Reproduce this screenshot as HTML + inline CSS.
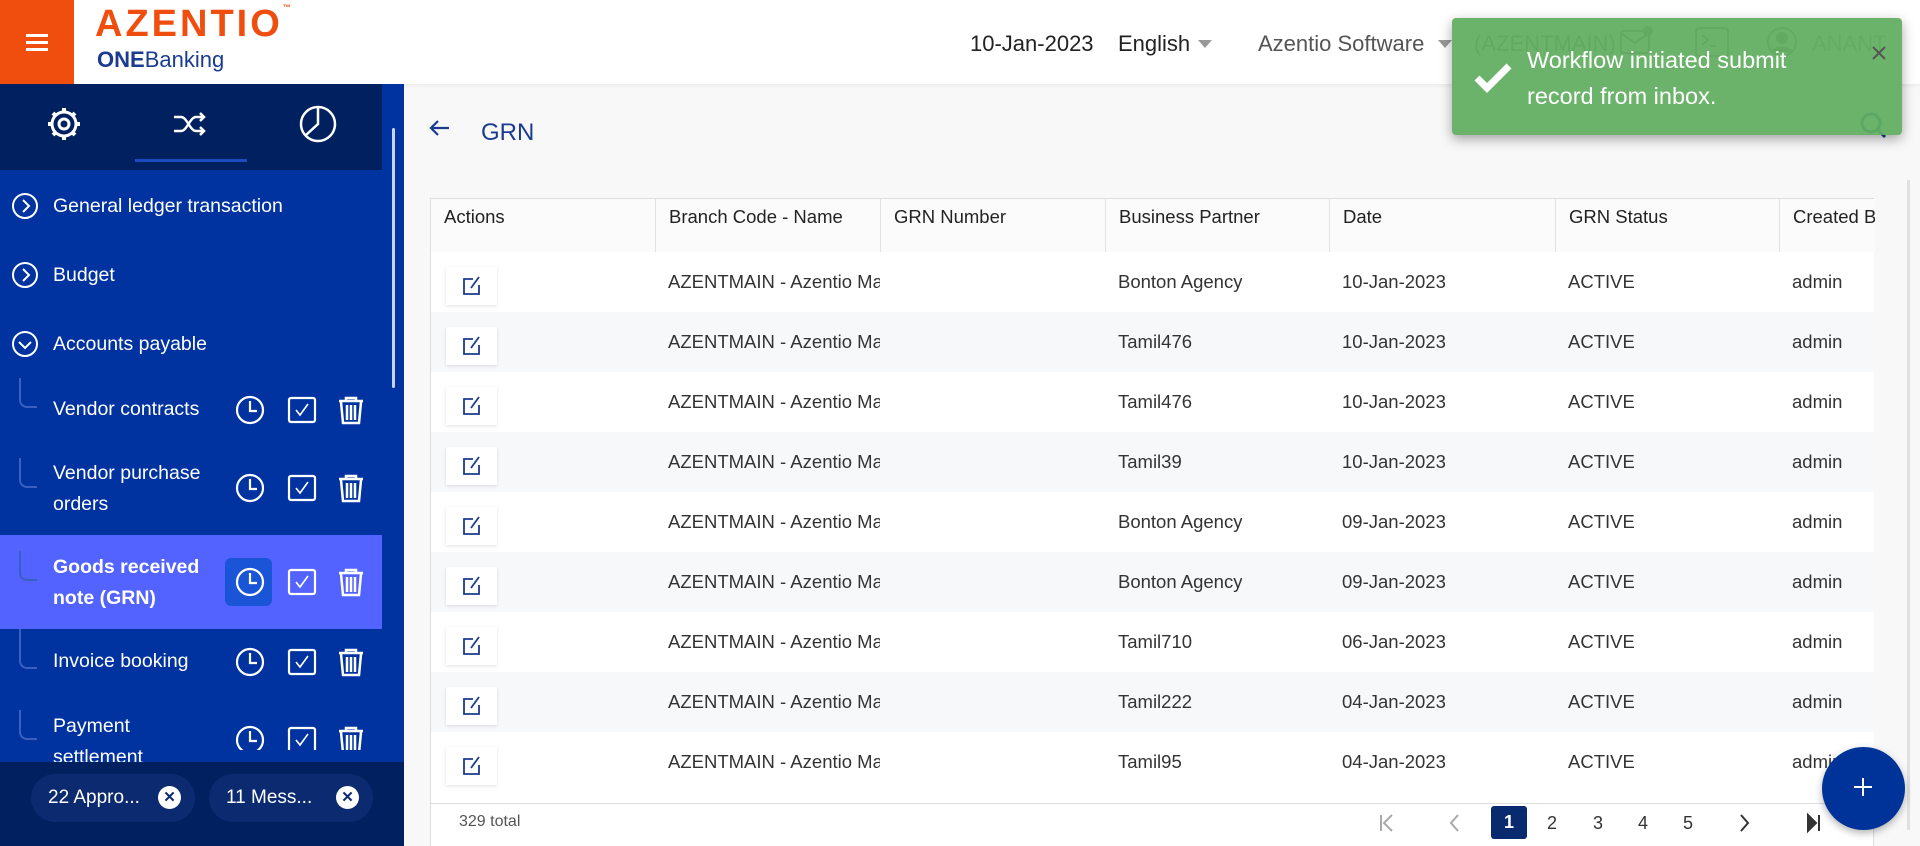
<!DOCTYPE html>
<html><head><meta charset="utf-8"><style>
*{box-sizing:border-box;margin:0;padding:0}
body{width:1920px;height:846px;overflow:hidden;background:#f8f8f8;font-family:"Liberation Sans",sans-serif;position:relative;color:#333}
.a{position:absolute}
.hdr{left:0;top:0;width:1920px;height:84px;background:#fff;box-shadow:0 2px 4px rgba(0,0,0,.05)}
.burger{left:0;top:0;width:74px;height:84px;background:#f04e0e}
.burger i{position:absolute;left:26px;width:22px;height:3px;background:#fff}
.htxt{font-size:22px;color:#222;top:31px}
.caret{width:0;height:0;border-left:7px solid transparent;border-right:7px solid transparent;border-top:8px solid #999;top:40px}
.side{left:0;top:84px;width:404px;height:762px;background:#0033a0}
.tabs{left:0;top:84px;width:382px;height:86px;background:#002060}
.mi{color:#fff;font-size:19.5px;left:53px}
.circ{left:12px;width:26px;height:26px;border:2px solid #fff;border-radius:50%}
.tree{left:19px;width:18px;border-left:2px solid #3a5fc0;border-bottom:2px solid #3a5fc0;border-bottom-left-radius:8px}
.tbl{left:430px;top:198px;width:1444px;height:648px;background:#fff;border:1px solid #ddd;border-bottom:none}
.th{top:0;height:54px;border-right:1px solid #e2e2e2;font-size:18.5px;color:#222;padding:7px 13px;background:#fbfbfb}
.row{left:0;width:1443px;height:60px}
.td{font-size:18.5px;color:#333;top:19px;white-space:nowrap;overflow:hidden}
.eb{left:15px;top:15px;width:51px;height:38px;background:#fff;box-shadow:0 1px 3px rgba(0,0,0,.12)}
.pg{font-size:18px;color:#333;top:813px}
.chip{top:774px;height:48px;border-radius:24px;background:#0b2a70;color:#fff;font-size:19px;padding:13px 0 0 17px}
.chip b{position:absolute;right:14px;top:12px;width:23px;height:23px;border-radius:50%;background:#fff;color:#0b2a70;font-size:15px;text-align:center;line-height:23px}
</style></head><body>
<div class="a hdr"></div>
<div class="a burger"><i style="top:34px"></i><i style="top:41px"></i><i style="top:48px"></i></div>
<div class="a" style="left:95px;top:3px;font-size:38px;font-weight:bold;color:#f04e0e;letter-spacing:3px">AZENTIO<span style="font-size:8px;vertical-align:top">™</span></div>
<div class="a" style="left:97px;top:47px;font-size:22px;color:#1a3b8f"><b>ONE</b>Banking</div>
<div class="a htxt" style="left:970px">10-Jan-2023</div>
<div class="a htxt" style="left:1118px">English</div><div class="a caret" style="left:1198px"></div>
<div class="a htxt" style="left:1258px;color:#555">Azentio Software</div><div class="a caret" style="left:1438px"></div>
<div class="a htxt" style="left:1474px;color:#555">(AZENTMAIN)</div>
<div class="a htxt" style="left:1812px;color:#888">ANANT</div>
<svg class="a" style="left:1620px;top:26px" width="240" height="32" fill="none" stroke="#666" stroke-width="2"><rect x="1" y="5" width="28" height="22" rx="2"/><path d="M1 7l14 10 14-10"/><circle cx="28" cy="5" r="4" fill="#666"/><rect x="76" y="2" width="32" height="28" rx="3"/><path d="M82 9l6 5-6 5M90 20h6"/><circle cx="162" cy="16" r="14"/><circle cx="162" cy="12" r="5" fill="#666"/><path d="M152 26c4-6 16-6 20 0" fill="#666"/></svg>

<div class="a side"></div>
<div class="a tabs"></div>
<svg class="a" style="left:40px;top:104px" width="300" height="40" fill="none" stroke="#fff" stroke-width="3"><circle cx="24" cy="20" r="12"/><circle cx="24" cy="20" r="5"/><path d="M24 4v4M24 32v4M8 20h4M36 20h4M13 9l3 3M32 28l3 3M13 31l3-3M32 12l3-3" stroke-width="4"/><path d="M134 13h7c6 0 9 14 15 14h7M134 27h7c6 0 9-14 15-14h7M160 9l4 4-4 4M160 23l4 4-4 4" stroke-width="2.5"/><circle cx="278" cy="20" r="17" stroke-width="2.5"/><path d="M278 3v17l-12 11" stroke-width="2.5"/></svg>
<div class="a" style="left:135px;top:159px;width:112px;height:3px;background:#1a4cc0"></div>
<div class="a" style="left:392px;top:128px;width:3px;height:260px;background:#c8d2ee;border-radius:2px"></div>

<div class="a circ" style="top:193px"></div><svg class="a" style="left:20px;top:199px" width="12" height="14" fill="none" stroke="#fff" stroke-width="2"><path d="M3 1l6 6-6 6"/></svg>
<div class="a mi" style="top:195px">General ledger transaction</div>
<div class="a circ" style="top:262px"></div><svg class="a" style="left:20px;top:268px" width="12" height="14" fill="none" stroke="#fff" stroke-width="2"><path d="M3 1l6 6-6 6"/></svg>
<div class="a mi" style="top:264px">Budget</div>
<div class="a circ" style="top:331px"></div><svg class="a" style="left:18px;top:339px" width="14" height="12" fill="none" stroke="#fff" stroke-width="2"><path d="M1 3l6 6 6-6"/></svg>
<div class="a mi" style="top:333px">Accounts payable</div>

<div class="a" style="left:0;top:535px;width:382px;height:94px;background:#5363ff"></div>
<div class="a" style="left:225px;top:558px;width:47px;height:48px;background:#1a55d8;border-radius:6px"></div>

<div class="a tree" style="top:378px;height:30px"></div><div class="a mi" style="top:398px">Vendor contracts</div>
<div class="a tree" style="top:458px;height:30px"></div><div class="a mi" style="top:458px;line-height:31px">Vendor purchase<br>orders</div>
<div class="a tree" style="top:551px;height:30px"></div><div class="a mi" style="top:552px;line-height:31px;font-weight:bold">Goods received<br>note (GRN)</div>
<div class="a tree" style="top:629px;height:40px"></div><div class="a mi" style="top:650px">Invoice booking</div>
<div class="a tree" style="top:710px;height:30px"></div><div class="a mi" style="top:711px;line-height:31px">Payment<br>settlement</div>

<svg class="a" style="left:230px;top:390px" width="140" height="360" fill="none" stroke="#fff" stroke-width="2.2">
<g id="ic"><circle cx="20" cy="20" r="13"/><path d="M20 11v10h7"/><rect x="59" y="8" width="26" height="24" rx="2"/><path d="M66 20l4 5 8-11" stroke-width="1.6"/><path d="M109 11h24M116 11v-3h10v3M111 12l2 21h16l2-21M117 15v15M121 15v15M125 15v15" stroke-width="2.5"/></g>
<use href="#ic" y="78"/><use href="#ic" y="172"/><use href="#ic" y="252"/><use href="#ic" y="330"/>
</svg>

<div class="a" style="left:0;top:762px;width:404px;height:84px;background:#012060"></div>
<div class="a chip" style="left:31px;width:164px">22 Appro...<b>✕</b></div>
<div class="a chip" style="left:209px;width:164px">11 Mess...<b>✕</b></div>

<svg class="a" style="left:428px;top:118px" width="24" height="20" fill="none" stroke="#1a3b8f" stroke-width="2.2"><path d="M21 10H3M10 3L3 10l7 7"/></svg>
<div class="a" style="left:481px;top:119px;font-size:24px;color:#1a3b8f">GRN</div>
<div class="a" style="left:1907px;top:180px;width:3px;height:650px;background:#e0e0e0"></div>

<div class="a tbl">
<div class="a th" style="left:0;width:225px">Actions</div>
<div class="a th" style="left:225px;width:225px">Branch Code - Name</div>
<div class="a th" style="left:450px;width:225px">GRN Number</div>
<div class="a th" style="left:675px;width:224px">Business Partner</div>
<div class="a th" style="left:899px;width:226px">Date</div>
<div class="a th" style="left:1125px;width:224px">GRN Status</div>
<div class="a th" style="left:1349px;width:95px;white-space:nowrap;overflow:hidden;border-right:none">Created By</div>
<div class="a" style="left:0;top:53px;width:1443px;height:1px;background:#ddd"></div>
<div class="a" style="left:0;top:604px;width:1443px;height:1px;background:#ddd"></div>
</div>
<div id="rows"></div>
<script>
var d=[["Bonton Agency","10-Jan-2023"],["Tamil476","10-Jan-2023"],["Tamil476","10-Jan-2023"],["Tamil39","10-Jan-2023"],["Bonton Agency","09-Jan-2023"],["Bonton Agency","09-Jan-2023"],["Tamil710","06-Jan-2023"],["Tamil222","04-Jan-2023"],["Tamil95","04-Jan-2023"]];
var h="";d.forEach(function(r,i){var y=252+i*60;h+='<div class="a row" style="left:431px;top:'+y+'px;background:'+(i%2?'#f7f8fa':'#fff')+'"><div class="a eb"><svg style="position:absolute;left:15px;top:8px" width="22" height="22" fill="none" stroke="#1a3b8f" stroke-width="1.8"><path d="M12 4H3v15h15v-9"/><path d="M10 13l8-11"/></svg></div><div class="a td" style="left:237px;width:212px">AZENTMAIN - Azentio Main</div><div class="a td" style="left:687px">'+r[0]+'</div><div class="a td" style="left:911px">'+r[1]+'</div><div class="a td" style="left:1137px">ACTIVE</div><div class="a td" style="left:1361px">admin</div></div>'});
document.getElementById("rows").innerHTML=h;
</script>
<div class="a" style="left:459px;top:813px;font-size:16px;color:#555">329 total</div>
<svg class="a" style="left:1378px;top:812px" width="460" height="22" fill="none" stroke-width="2"><path d="M3 3v16M14 3l-8 8 8 8" stroke="#aaa"/><path d="M80 3l-7 8 7 8" stroke="#aaa"/><path d="M363 3l7 8-7 8" stroke="#333"/><path d="M430 3l8 8-8 8z" fill="#333" stroke="#333"/><path d="M441 3v16" stroke="#333"/></svg>
<div class="a" style="left:1491px;top:806px;width:36px;height:33px;background:#0a2a70;border-radius:3px;color:#fff;font-weight:bold;font-size:18px;text-align:center;line-height:33px">1</div>
<div class="a pg" style="left:1547px">2</div><div class="a pg" style="left:1593px">3</div><div class="a pg" style="left:1638px">4</div><div class="a pg" style="left:1683px">5</div>
<div class="a" style="left:1822px;top:747px;width:83px;height:83px;border-radius:50%;background:#003399;box-shadow:0 3px 8px rgba(0,0,0,.3)"></div>
<svg class="a" style="left:1852px;top:776px" width="22" height="22" stroke="#fff" stroke-width="2"><path d="M11 2v18M2 11h18"/></svg>

<svg class="a" style="left:1858px;top:110px" width="30" height="34" fill="none" stroke="#1a3b8f" stroke-width="3"><circle cx="13" cy="13" r="9"/><path d="M20 20l7 7"/></svg>
<div class="a" style="left:1452px;top:18px;width:450px;height:117px;background:rgba(98,174,98,.94);border-radius:4px;box-shadow:0 4px 12px rgba(0,0,0,.35)"></div>
<svg class="a" style="left:1474px;top:62px" width="40" height="32" fill="none" stroke="#fff" stroke-width="7"><path d="M3 16l10 10L35 4"/></svg>
<div class="a" style="left:1527px;top:42px;font-size:23.5px;line-height:36px;color:#fff">Workflow initiated submit<br>record from inbox.</div>
<svg class="a" style="left:1872px;top:46px" width="14" height="14" stroke="#555" stroke-width="2"><path d="M1 1l12 12M13 1L1 13"/></svg>
</body></html>
